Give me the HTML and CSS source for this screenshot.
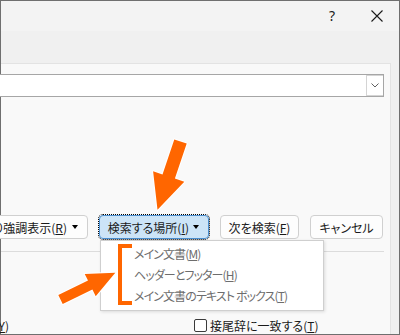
FILE: index.html
```html
<!DOCTYPE html>
<html lang="ja">
<head>
    <meta charset="UTF-8">
    <title>検索と置換</title>
    <link rel="stylesheet" href="styles.css">
</head>
<body>
    <div class="window">
        <div class="titlebar">
            <span class="help">?</span>
            <svg class="close" width="12" height="12" viewBox="0 0 12 12">
                <path d="M0.5 0.5 L11.5 11.5 M11.5 0.5 L0.5 11.5" stroke="#1a1a1a" stroke-width="1.1" fill="none"/>
            </svg>
        </div>
        <div class="body">
            <div class="panel">
                <div class="combo">
                    <div class="combo-field"></div>
                    <div class="combo-btn">
                        <svg width="8" height="5" viewBox="0 0 8 5">
                            <polyline points="0.5,0.5 4,4 7.5,0.5" stroke="#606060" stroke-width="1" fill="none"/>
                        </svg>
                    </div>
                </div>

                <div class="actions">
                    <button class="btn btn-menu"><span>読み取り強調表示(<u>R</u>)</span><i class="caret"></i></button>
                    <button class="btn btn-menu btn-focus"><span>検索する場所(<u>I</u>)</span><i class="caret"></i></button>
                    <button class="btn btn-next"><span>次を検索(<u>F</u>)</span></button>
                    <button class="btn btn-cancel"><span>キャンセル</span></button>
                </div>

                <div class="sep"></div>

                <div class="options">
                    <div class="opt-left"></div>
                    <div class="opt"><span class="check"></span></div>
                    <div class="opt-left"><span>完全に一致する単語だけを検索する(<u>Y</u>)</span></div>
                    <label class="opt"><span class="check"></span><span>接尾辞に一致する(<u>T</u>)</span></label>
                </div>
            </div>
        </div>

        <div class="menu">
            <div class="menu-item">メイン文書(<u>M</u>)</div>
            <div class="menu-item">ヘッダーとフッター(<u>H</u>)</div>
            <div class="menu-item">メイン文書のテキスト ボックス(<u>T</u>)</div>
        </div>

        <div class="bracket"></div>

        <svg class="arrows" width="400" height="335" viewBox="0 0 400 335">
            <polygon points="174.3,139.4 162.5,174.4 153.1,171.2 157.5,209.7 184.3,181.8 174.9,178.6 186.7,143.6"
                     fill="#ff6600" stroke="#fff" stroke-width="2" stroke-linejoin="round" paint-order="stroke"/>
            <polygon points="58.3,295.0 88.0,280.6 84.7,273.9 115.3,272.8 95.7,296.3 92.4,289.6 62.7,304.0"
                     fill="#ff6600" stroke="#fff" stroke-width="2" stroke-linejoin="round" paint-order="stroke"/>
        </svg>
    </div>
</body>
</html>
```

FILE: styles.css
```css
* {
    box-sizing: border-box;
}
html, body {
    margin: 0;
    padding: 0;
    overflow: hidden;
}
body {
    font-family: "Noto Sans CJK JP", "Noto Sans", sans-serif;
    font-size: 12px;
    font-feature-settings: "palt";
    color: #1a1a1a;
}
u {
    text-underline-offset: 1px;
}
.window {
    position: relative;
    width: 400px;
    height: 335px;
    border: 1px solid #6f6f6f;
    background: #f0f0f0;
    display: flex;
    flex-direction: column;
}
.titlebar {
    height: 30px;
    flex: none;
    background: #f3f3f3;
    display: flex;
    align-items: center;
    justify-content: flex-end;
    gap: 36px;
    padding-right: 16px;
}
.help {
    font-family: "Noto Sans", sans-serif;
    font-size: 14px;
    line-height: 14px;
    color: #1a1a1a;
}
.close {
    display: block;
}
.body {
    flex: 1;
    display: flex;
    flex-direction: column;
    padding: 32px 8px 0 0;
}
.panel {
    flex: 1;
    background: #f9f9f9;
    border-top: 1px solid #e3e3e3;
    border-right: 1px solid #e3e3e3;
    padding: 10px 6px 0 0;
}
.combo {
    display: flex;
    height: 23px;
    margin-left: -30px;
    border: 1px solid #a6a6a6;
    background: #fff;
}
.combo-field {
    flex: 1;
}
.combo-btn {
    width: 17px;
    border: 1px solid #d4d4d4;
    border-right: none;
    display: flex;
    align-items: center;
    justify-content: center;
}
.combo-btn svg {
    display: block;
}
.actions {
    margin-top: 118px;
    display: flex;
    justify-content: flex-end;
    gap: 11px;
    padding-right: 1px;
}
.btn {
    flex: none;
    height: 24px;
    padding: 0;
    border: 1px solid #d0d0d0;
    border-radius: 4px;
    background: #fdfdfd;
    font-family: inherit;
    font-size: 12px;
    font-feature-settings: "palt";
    color: #1a1a1a;
    display: flex;
    align-items: center;
    justify-content: center;
    white-space: nowrap;
}
.btn-menu {
    justify-content: flex-end;
    padding: 0 9px 0 9px;
    gap: 5px;
}
.btn-focus {
    width: 110px;
    gap: 4px;
    background: #cce4f7;
    border-color: #4a8fd0;
    outline: 1px dotted #000;
    outline-offset: 0;
}
.btn-next {
    width: 79px;
}
.btn-cancel {
    width: 73px;
}
.caret {
    width: 0;
    height: 0;
    border-left: 3.5px solid transparent;
    border-right: 3.5px solid transparent;
    border-top: 4px solid #000;
}
.sep {
    margin-top: 12px;
    border-top: 1px solid #dcdcdc;
}
.options {
    margin-top: 45px;
    display: grid;
    grid-template-columns: 8px auto;
    column-gap: 185px;
    row-gap: 9px;
    grid-auto-rows: 13px;
}
.opt-left {
    display: flex;
    justify-content: flex-end;
    align-items: center;
    white-space: nowrap;
    line-height: 13px;
}
.opt {
    display: flex;
    align-items: center;
    gap: 3px;
    white-space: nowrap;
    line-height: 13px;
}
.check {
    flex: none;
    width: 13px;
    height: 13px;
    border: 1px solid #3a3a3a;
    border-radius: 2px;
    background: #fff;
}
.menu {
    position: absolute;
    left: 99px;
    top: 239px;
    width: 224px;
    height: 71px;
    padding: 2px 0 0 33px;
    background: #fff;
    border: 1px solid #cfcfcf;
    box-shadow: 1px 1px 3px rgba(0, 0, 0, 0.12);
    color: #6d6d6d;
}
.menu-item {
    height: 21px;
    line-height: 21px;
    white-space: nowrap;
    letter-spacing: -0.9px;
}
.bracket {
    position: absolute;
    left: 117px;
    top: 243px;
    width: 14px;
    height: 61px;
    border: 4px solid #ff6600;
    border-right: none;
}
.arrows {
    position: absolute;
    left: -1px;
    top: -1px;
}
```
